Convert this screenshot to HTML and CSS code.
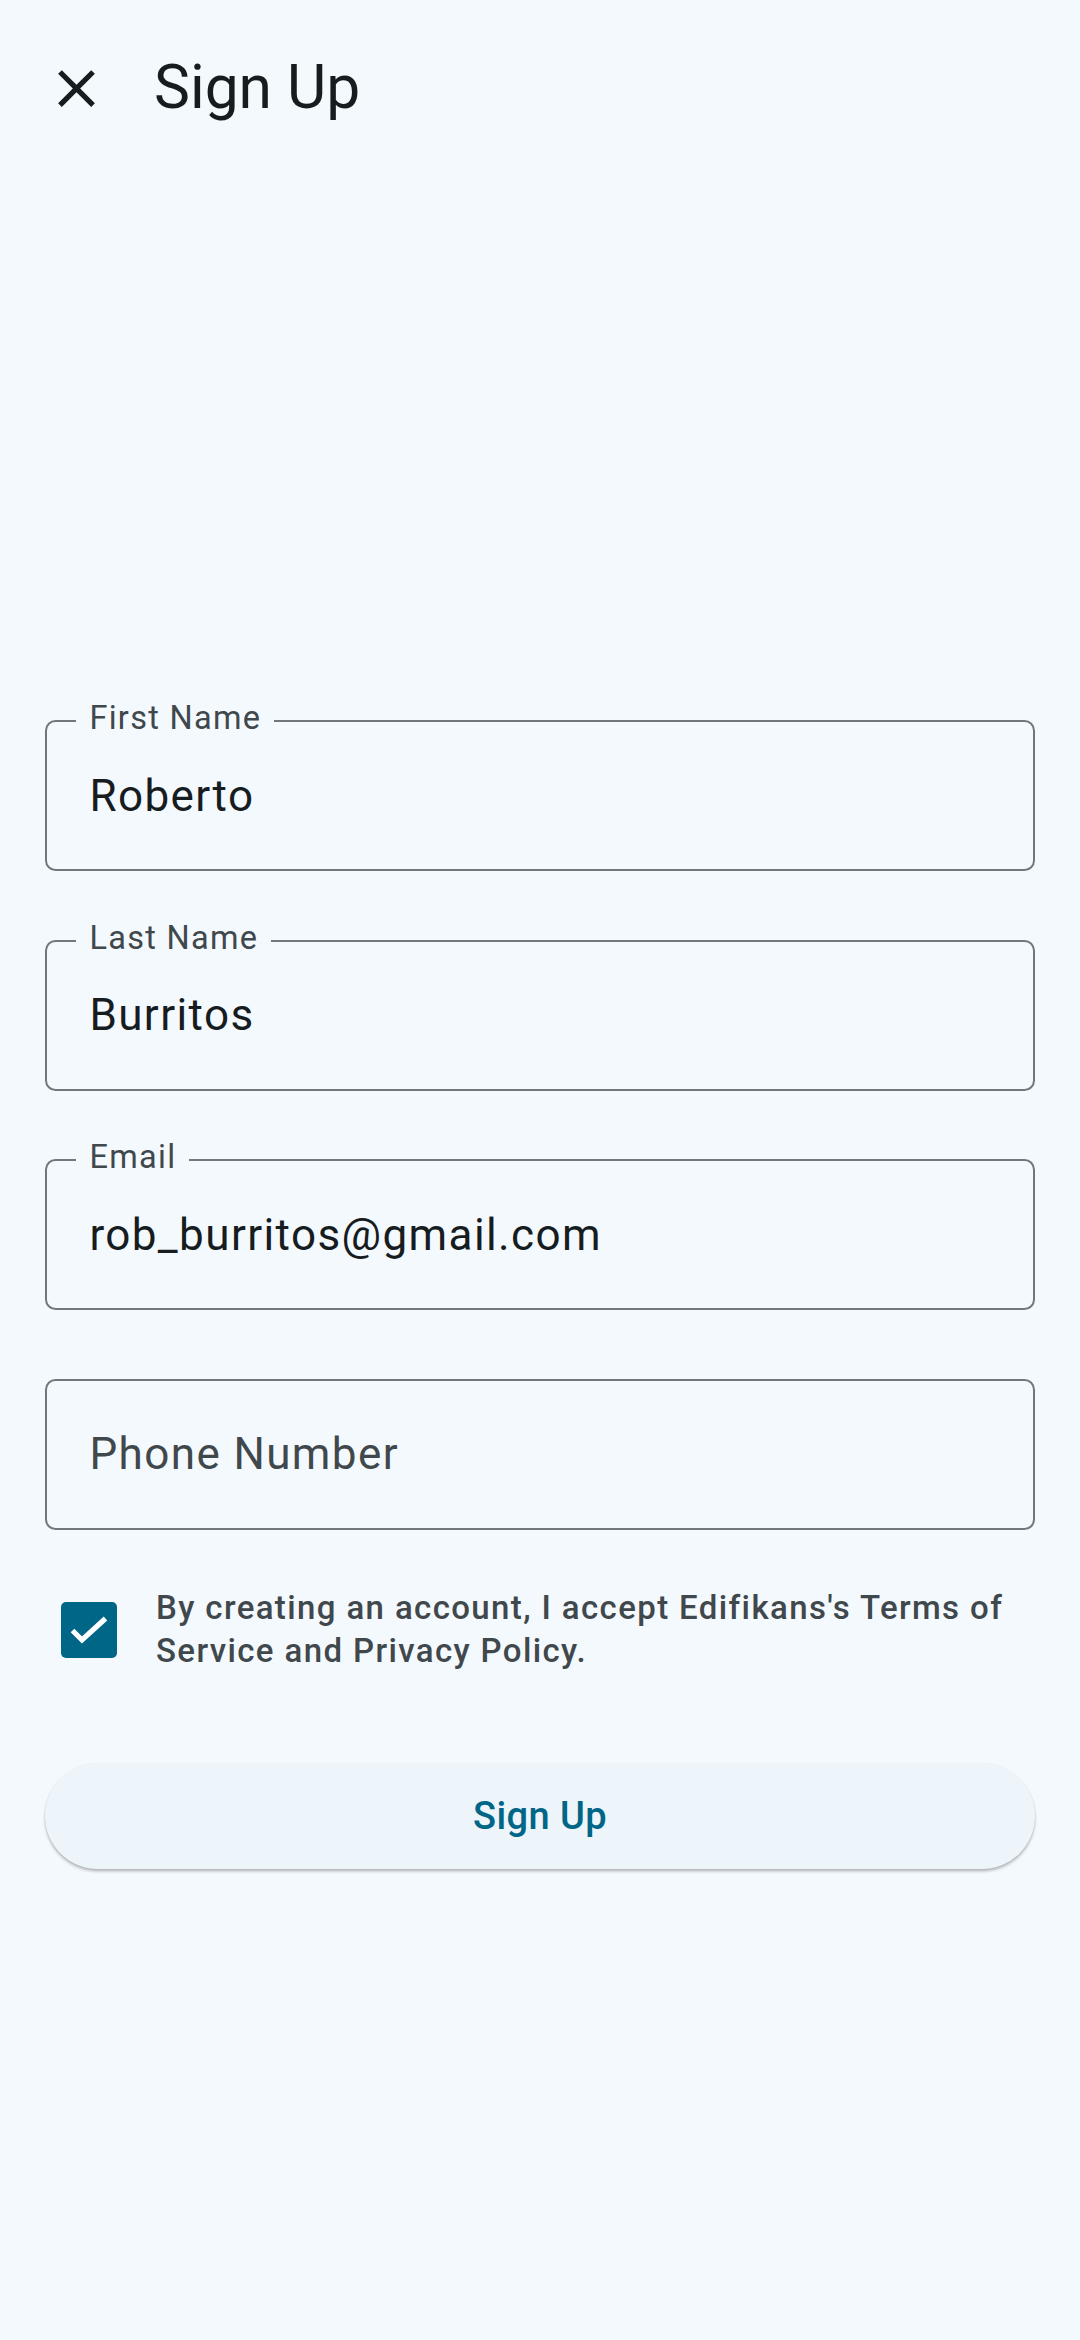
FILE: index.html
```html
<!DOCTYPE html>
<html lang="en">
<head>
<meta charset="utf-8">
<title>Sign Up</title>
<link rel="stylesheet" href="styles.css">
</head>
<body>
<div class="screen">
  <header class="app-bar">
    <button class="icon-btn" aria-label="Close">
      <svg viewBox="0 0 24 24" width="63" height="63"><path d="M19 6.41 17.59 5 12 10.59 6.41 5 5 6.41 10.59 12 5 17.59 6.41 19 12 13.41 17.59 19 19 17.59 13.41 12z" fill="#171c1f"/></svg>
    </button>
    <h1 class="title">Sign Up</h1>
  </header>

  <form class="form">
    <div class="field">
      <span class="field-label">First Name</span>
      <span class="field-value">Roberto</span>
    </div>
    <div class="field">
      <span class="field-label">Last Name</span>
      <span class="field-value">Burritos</span>
    </div>
    <div class="field">
      <span class="field-label">Email</span>
      <span class="field-value">rob_burritos@gmail.com</span>
    </div>
    <div class="field">
      <span class="field-value placeholder">Phone Number</span>
    </div>

    <div class="terms">
      <span class="checkbox">
        <svg viewBox="0 0 56 56" width="56" height="56"><path d="M11.5 28.5 21 38 44.5 16.5" fill="none" stroke="#fff" stroke-width="5.2" stroke-linecap="butt" stroke-linejoin="miter"/></svg>
      </span>
      <p class="terms-text">By creating an account, I accept Edifikans's Terms of Service and Privacy Policy.</p>
    </div>

    <button type="button" class="primary-btn">Sign Up</button>
  </form>
</div>
</body>
</html>
```

FILE: styles.css
```css
* { box-sizing: border-box; }
html, body {
  margin: 0;
  padding: 0;
  background: #f4f9fe;
}
body {
  font-family: Roboto, "Noto Sans", sans-serif;
  color: #171c1f;
  width: 1080px;
  height: 2340px;
}
.screen {
  width: 1080px;
  min-height: 2340px;
  background: #f4f9fe;
}
.app-bar {
  height: 176px;
  display: flex;
  align-items: center;
  padding-left: 45px;
}
.icon-btn {
  width: 63px;
  height: 63px;
  padding: 0;
  border: 0;
  background: transparent;
  display: flex;
  align-items: center;
  justify-content: center;
}
.icon-btn svg { display: block; }
.title {
  margin: 0 0 0 46px;
  font-size: 60.5px;
  font-weight: 400;
  color: #171c1f;
  line-height: 1;
}
.form {
  padding: 544px 45px 0 45px;
  display: flex;
  flex-direction: column;
}
.field {
  position: relative;
  height: 151px;
  border: 2.6px solid #70787e;
  border-radius: 10.5px;
  display: flex;
  align-items: center;
  padding: 0 42.4px;
  margin-bottom: 68.5px;
}
.field-label {
  position: absolute;
  left: 29.4px;
  top: -20px;
  padding: 0 13px;
  background: #f4f9fe;
  font-size: 32.5px;
  line-height: 32.5px;
  letter-spacing: 1.3px;
  color: #40484c;
}
.field-value {
  font-size: 44px;
  letter-spacing: 1.4px;
  color: #171c1f;
  line-height: 1;
}
.field-value.placeholder { color: #40484c; }
.terms {
  display: flex;
  align-items: center;
  margin-top: -11px;
  padding-left: 16px;
}
.checkbox {
  flex: none;
  width: 56px;
  height: 56px;
  border-radius: 5px;
  background: #006688;
  display: flex;
  align-items: center;
  justify-content: center;
}
.checkbox svg { display: block; }
.terms-text {
  margin: 0 0 0 39px;
  font-size: 33px;
  line-height: 42.5px;
  font-weight: 500;
  letter-spacing: 1.375px;
  color: #40484c;
}
.primary-btn {
  margin-top: 91px;
  height: 106px;
  border: 0;
  border-radius: 53px;
  background: #edf4fa;
  box-shadow: 0 2.6px 3px rgba(0,0,0,0.22), 0 1px 2px rgba(0,0,0,0.08);
  font-family: Roboto, "Noto Sans", sans-serif;
  font-size: 38px;
  font-weight: 500;
  letter-spacing: 0.4px;
  color: #006688;
}
```
